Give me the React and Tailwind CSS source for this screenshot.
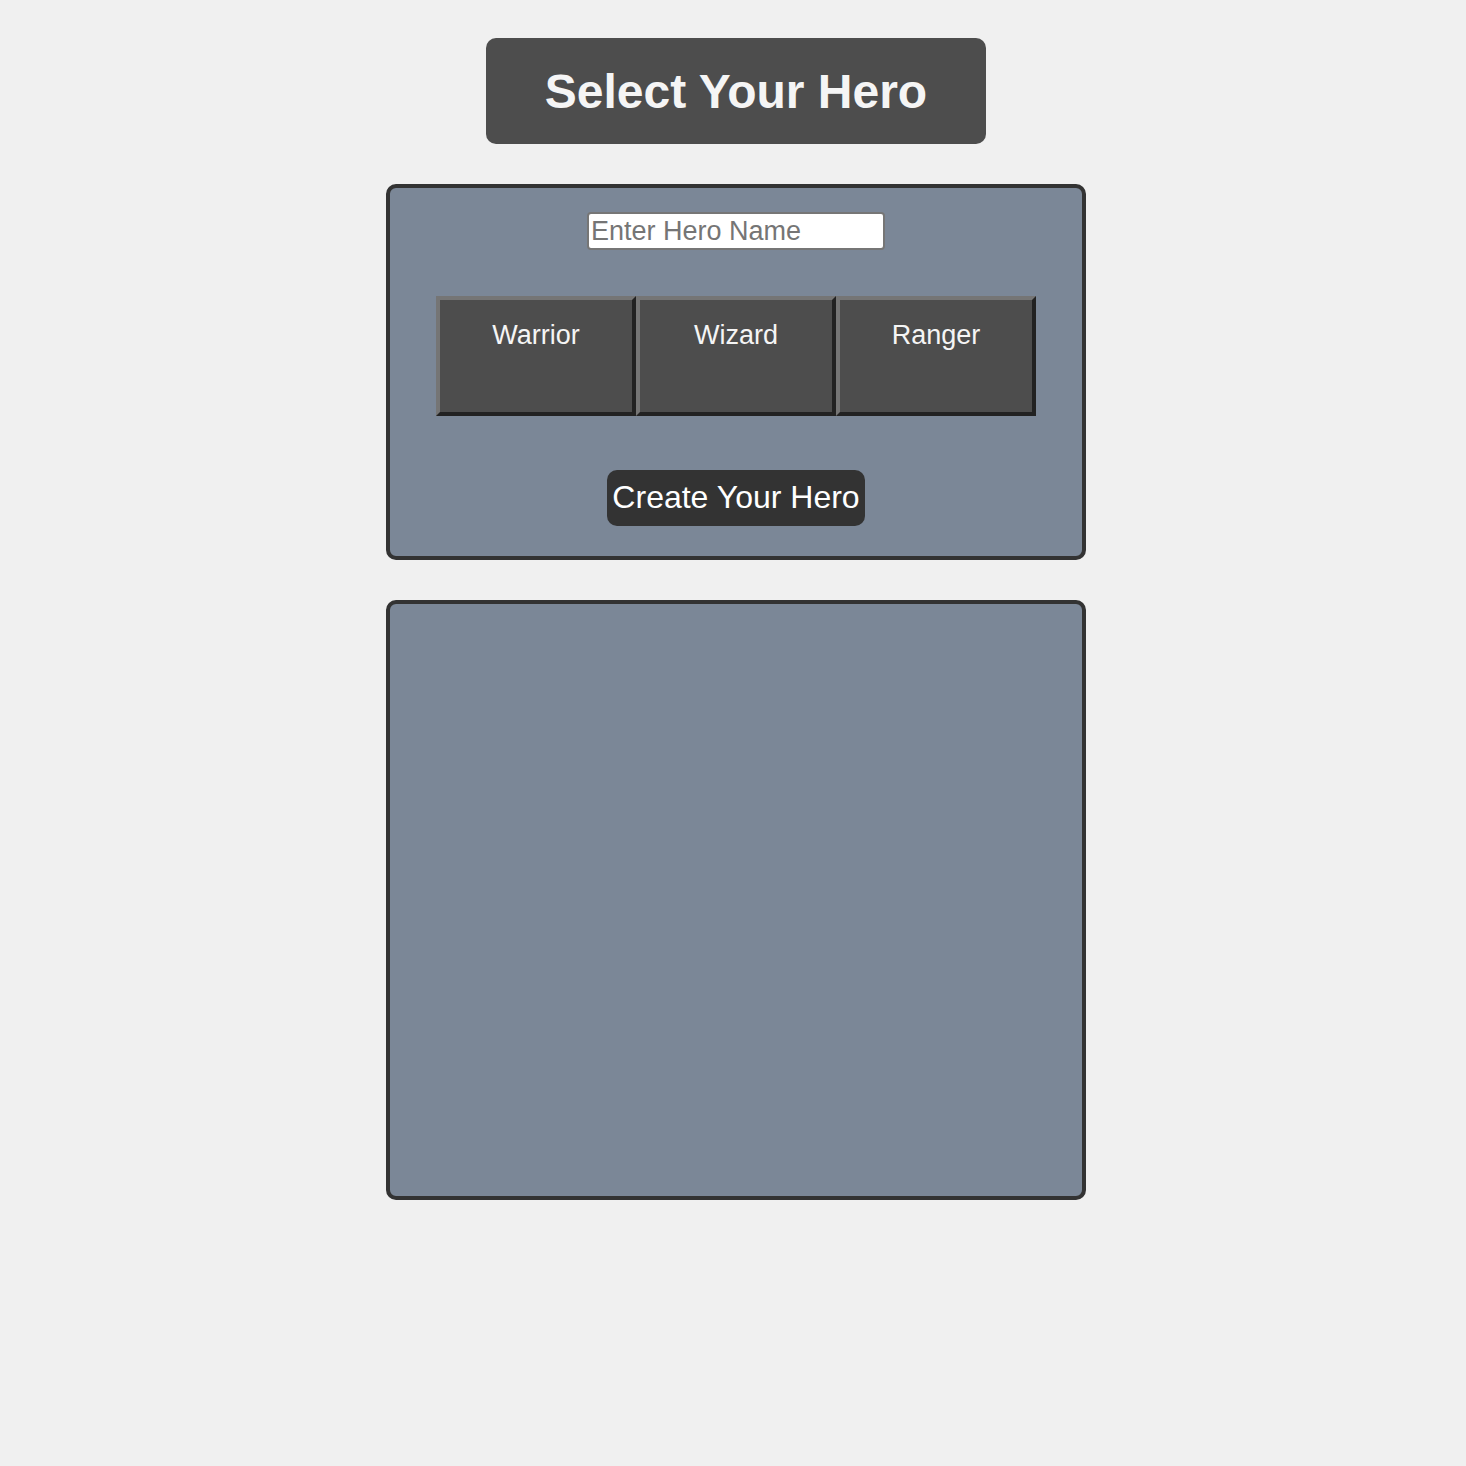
const heroes = ["Warrior", "Wizard", "Ranger"];

export default function App() {
  return (
    <main
      className={`min-h-screen bg-[#f0f0f0] pt-[38px] pr-4 pb-10 pl-[22px] font-["Liberation_Sans",Arial,sans-serif]`}
    >
      <h1 className="mx-auto max-w-[500px] rounded-[10px] bg-[#4d4d4d] pt-[26px] pb-6 text-center text-5xl leading-[56px] font-bold text-[#f5f5f5]">
        Select Your Hero
      </h1>

      <form
        className="mx-auto mt-10 flex max-w-[700px] flex-col items-center rounded-[10px] border-4 border-[#333333] bg-[#7b8797] px-[46px] pt-6 pb-[30px]"
        onSubmit={(event) => event.preventDefault()}
      >
        <input
          type="text"
          aria-label="Hero name"
          placeholder="Enter Hero Name"
          className="h-[38px] w-full max-w-[298px] rounded-[4px] border-2 border-[#767676] bg-white px-0.5 text-[27px] leading-8 text-black placeholder:text-[#757575]"
        />

        <div className="mt-[46px] grid w-full grid-cols-3">
          {heroes.map((hero) => (
            <button
              key={hero}
              type="button"
              className="flex h-[120px] justify-center border-4 border-t-[#757575] border-r-[#222222] border-b-[#222222] border-l-[#757575] bg-[#4d4d4d] pt-5 text-[27px] leading-[30px] text-[#f5f5f5]"
            >
              {hero}
            </button>
          ))}
        </div>

        <button
          type="submit"
          className="mt-[54px] rounded-[10px] bg-[#333333] px-[5px] pt-[9px] pb-[11px] text-[32px] leading-9 text-white"
        >
          Create Your Hero
        </button>
      </form>

      <section
        aria-label="Created hero"
        className="mx-auto mt-10 min-h-[600px] max-w-[700px] rounded-[10px] border-4 border-[#333333] bg-[#7b8797]"
      />
    </main>
  );
}
